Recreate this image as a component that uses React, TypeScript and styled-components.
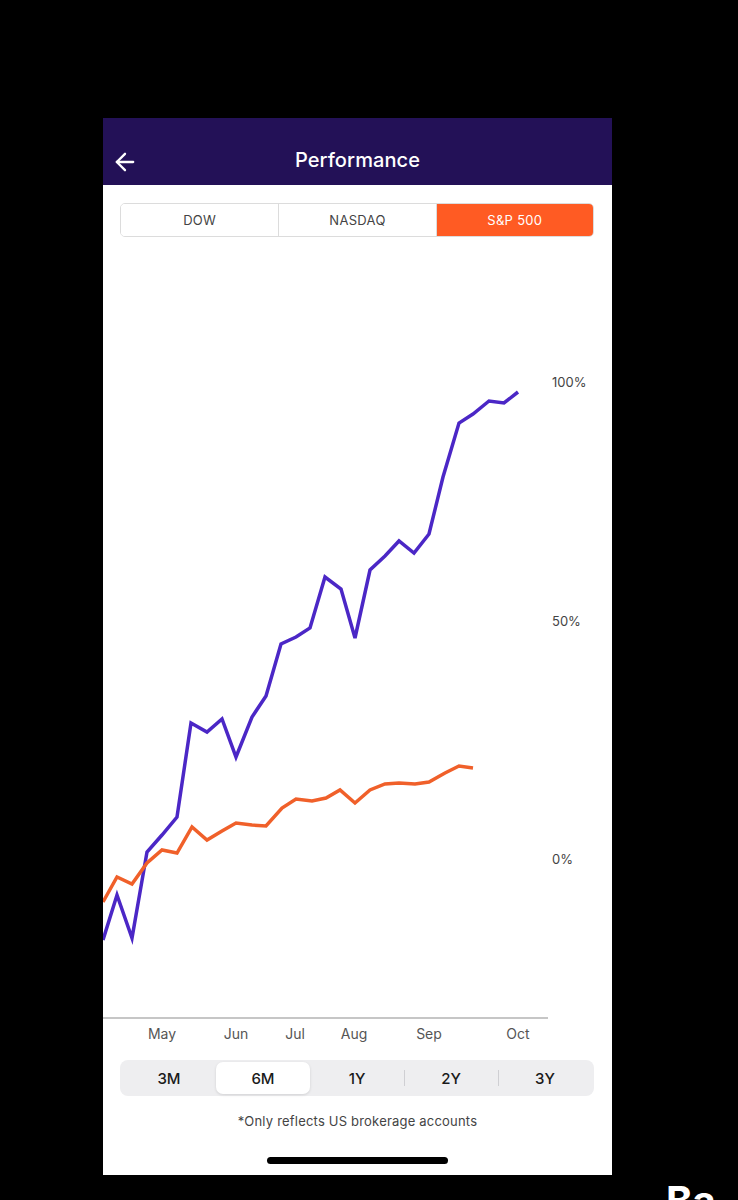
import React, { useState } from "react";
import styled, { createGlobalStyle } from "styled-components";
import { ArrowLeft } from "lucide-react";

const GlobalStyle = createGlobalStyle`
  html, body { margin: 0; padding: 0; background: #000; overflow: hidden; }
  body { font-family: Inter, "Noto Sans", "Liberation Sans", sans-serif; }
  * { box-sizing: border-box; }
`;

const Page = styled.div`
  width: 738px;
  height: 1200px;
  padding: 118px 0 0 103px;
  display: flex;
  flex-direction: column;
  overflow: hidden;
`;

const Phone = styled.div`
  flex-shrink: 0;
  width: 509px;
  height: 1057px;
  background: #fff;
  display: flex;
  flex-direction: column;
`;

const Header = styled.header`
  height: 67px;
  background: #231157;
  padding: 22px 0 5px;
`;

const HeaderRow = styled.div`
  position: relative;
  height: 40px;
  display: flex;
  align-items: center;
  justify-content: center;
`;

const BackButton = styled.button`
  position: absolute;
  left: 8px;
  top: 50%;
  transform: translateY(-50%);
  margin-top: 2px;
  background: none;
  border: 0;
  padding: 0;
  display: flex;
  color: #fff;
`;

const Title = styled.h1`
  margin: 0;
  color: #fff;
  font-size: 20px;
  font-weight: 500;
  letter-spacing: 0.1px;
`;

const Segments = styled.div`
  margin: 18px 18px 0 17px;
  height: 34px;
  display: grid;
  grid-template-columns: repeat(3, 1fr);
  border: 1px solid #dcdcdc;
  border-radius: 5px;
  overflow: hidden;
`;

const Segment = styled.button<{ $active?: boolean }>`
  border: 0;
  border-left: 1px solid #dcdcdc;
  &:first-child { border-left: 0; }
  background: ${(p) => (p.$active ? "#ff5b23" : "#fff")};
  color: ${(p) => (p.$active ? "#fff" : "#444")};
  font-family: inherit;
  font-size: 13px;
  letter-spacing: 0.3px;
  padding: 0;
`;

const ChartSvg = styled.svg`
  display: block;
  flex-shrink: 0;
  width: 509px;
  height: 811px;
`;

const Periods = styled.div`
  margin: 12px 18px 0 17px;
  height: 36px;
  background: #eeeef0;
  border-radius: 8px;
  padding: 2px;
  display: grid;
  grid-template-columns: repeat(5, 1fr);
`;

const Period = styled.button<{ $active?: boolean; $sep?: boolean }>`
  position: relative;
  border: 0;
  border-radius: 7px;
  background: ${(p) => (p.$active ? "#fff" : "transparent")};
  box-shadow: ${(p) => (p.$active ? "0 1px 3px rgba(0,0,0,0.12)" : "none")};
  font-family: inherit;
  font-size: 15px;
  font-weight: 500;
  color: #1a1a1a;
  padding: 0;
  &::before {
    content: "";
    display: ${(p) => (p.$sep ? "block" : "none")};
    position: absolute;
    left: 0;
    top: 8px;
    bottom: 8px;
    width: 1px;
    background: #cfcfd3;
  }
`;

const Footnote = styled.p`
  margin: 17px 0 0;
  text-align: center;
  font-size: 13px;
  line-height: 16px;
  color: #444;
  letter-spacing: 0.2px;
`;

const HomeIndicator = styled.div`
  margin: 28px auto 0;
  width: 181px;
  height: 7px;
  border-radius: 4px;
  background: #000;
`;

const Caption = styled.div`
  margin: 6px 0 0 563px;
  color: #fff;
  font-size: 40px;
  font-weight: 700;
  line-height: 1;
  white-space: nowrap;
`;

const purple: [number, number][] = [
  [103, 940], [117, 895], [132, 938], [147, 852], [162, 835], [177, 817],
  [191, 723], [207, 732], [222, 719], [236, 757], [252, 717], [266, 696],
  [281, 644], [296, 637], [310, 628], [325, 577], [341, 589], [355, 638],
  [370, 570], [385, 556], [399, 541], [414, 553], [429, 534], [443, 477],
  [459, 423], [473, 414], [489, 401], [504, 403], [518, 392],
];

const orange: [number, number][] = [
  [103, 902], [117, 877], [132, 884], [147, 863], [162, 850], [177, 853],
  [192, 827], [207, 840], [222, 831], [236, 823], [252, 825], [266, 826],
  [282, 808], [296, 799], [312, 801], [326, 798], [340, 790], [355, 803],
  [370, 790], [385, 784], [399, 783], [415, 784], [429, 782], [445, 773],
  [459, 766], [473, 768],
];

const toPoints = (pts: [number, number][]) =>
  pts.map(([x, y]) => `${x - 103},${y - 237}`).join(" ");

const yLabels = [
  { t: "100%", y: 146 },
  { t: "50%", y: 385 },
  { t: "0%", y: 623 },
];

const months = [
  { t: "May", x: 59 },
  { t: "Jun", x: 133 },
  { t: "Jul", x: 192 },
  { t: "Aug", x: 251 },
  { t: "Sep", x: 326 },
  { t: "Oct", x: 415 },
];

const periods = ["3M", "6M", "1Y", "2Y", "3Y"];

export default function App() {
  const [index, setIndex] = useState(2);
  const [period, setPeriod] = useState(1);
  return (
    <>
      <GlobalStyle />
      <Page>
        <Phone>
          <Header>
            <HeaderRow>
              <BackButton aria-label="Back">
                <ArrowLeft size={28} strokeWidth={2} />
              </BackButton>
              <Title>Performance</Title>
            </HeaderRow>
          </Header>
          <Segments>
            {["DOW", "NASDAQ", "S&P 500"].map((s, i) => (
              <Segment key={s} $active={i === index} onClick={() => setIndex(i)}>
                {s}
              </Segment>
            ))}
          </Segments>
          <ChartSvg viewBox="0 0 509 811">
            <polyline
              points={toPoints(purple)}
              fill="none"
              stroke="#4b27c6"
              strokeWidth={3.5}
              strokeLinejoin="miter"
            />
            <polyline
              points={toPoints(orange)}
              fill="none"
              stroke="#f0602a"
              strokeWidth={3.5}
              strokeLinejoin="miter"
            />
            <line x1={0} y1={781} x2={445} y2={781} stroke="#c6c6c6" strokeWidth={2} />
            {yLabels.map((l) => (
              <text
                key={l.t}
                x={449}
                y={l.y}
                dominantBaseline="middle"
                fontSize={13}
                fill="#444"
                fontFamily="Inter, sans-serif"
              >
                {l.t}
              </text>
            ))}
            {months.map((m) => (
              <text
                key={m.t}
                x={m.x}
                y={798}
                textAnchor="middle"
                dominantBaseline="middle"
                fontSize={14}
                fill="#555"
                fontFamily="Inter, sans-serif"
              >
                {m.t}
              </text>
            ))}
          </ChartSvg>
          <Periods>
            {periods.map((p, i) => (
              <Period
                key={p}
                $active={i === period}
                $sep={i > 0 && i !== period && i - 1 !== period}
                onClick={() => setPeriod(i)}
              >
                {p}
              </Period>
            ))}
          </Periods>
          <Footnote>*Only reflects US brokerage accounts</Footnote>
          <HomeIndicator />
        </Phone>
        <Caption>Ba</Caption>
      </Page>
    </>
  );
}
